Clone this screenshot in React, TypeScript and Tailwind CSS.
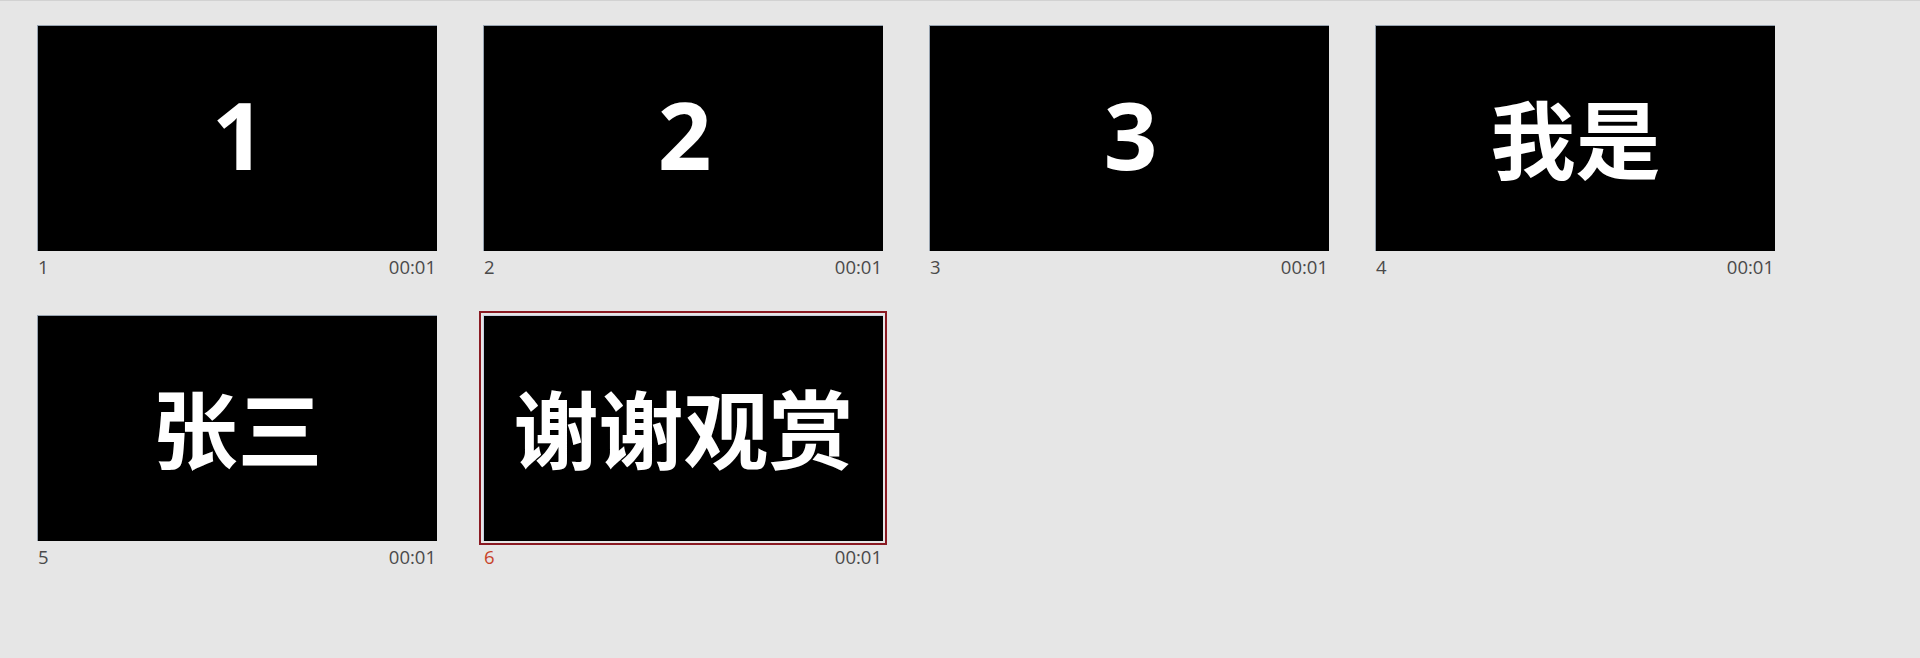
const slides = [
  { n: 1, text: "1", time: "00:01" },
  { n: 2, text: "2", time: "00:01" },
  { n: 3, text: "3", time: "00:01" },
  { n: 4, text: "我是", time: "00:01" },
  { n: 5, text: "张三", time: "00:01" },
  { n: 6, text: "谢谢观赏", time: "00:01" },
]

const selected = 6

function SlideThumb({ n, text, time }: { n: number; text: string; time: string }) {
  const active = n === selected
  const isDigit = /^\d+$/.test(text)
  return (
    <div className="flex flex-col w-[400px]">
      <div className="relative">
        {active && (
          <div className="absolute -inset-[4px] border-2 border-[#8a1a22] pointer-events-none" />
        )}
        <div
          className={
            "h-[226px] w-[400px] bg-black flex items-center justify-center border-t border-l " +
            (active ? "border-[#c9cfe0]" : "border-[#97a3b0]")
          }
        >
          {isDigit ? (
            <span className="text-white font-bold text-[94px] leading-none pb-[10px] tracking-[-2px] font-['Open_Sans',sans-serif]">
              {text}
            </span>
          ) : (
            <span className="text-white font-bold text-[85px] leading-none pb-[6px] font-['Noto_Sans_CJK_SC',sans-serif]">
              {text}
            </span>
          )}
        </div>
      </div>
      <div className="flex justify-between items-center mt-[4px] h-[24px] px-[1px] text-[18.5px] font-['Open_Sans','Noto_Sans',sans-serif]">
        <span className={active ? "text-[#c8442a]" : "text-[#4a4a4a]"}>{n}</span>
        <span className="text-[#4a4a4a]">{time}</span>
      </div>
    </div>
  )
}

export default function App() {
  return (
    <div className="w-[1920px] h-[658px] bg-[#e6e6e6] border-t border-[#d2d2d2] overflow-hidden">
      <div className="grid grid-cols-[repeat(4,400px)] gap-x-[46px] gap-y-[36px] pl-[37px] pt-[24px]">
        {slides.map((s) => (
          <SlideThumb key={s.n} {...s} />
        ))}
      </div>
    </div>
  )
}
